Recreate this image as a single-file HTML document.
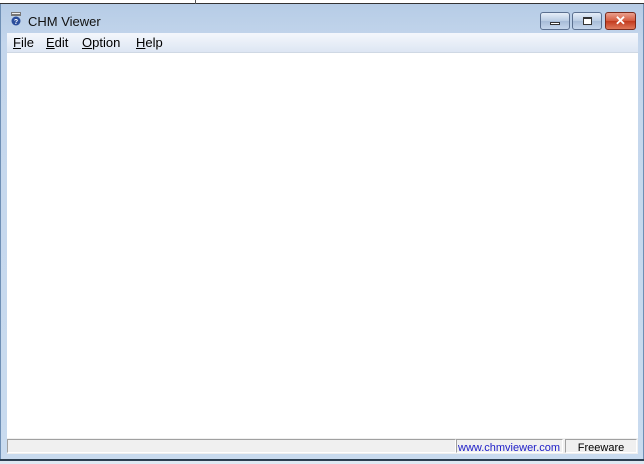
<!DOCTYPE html>
<html><head><style>
*{margin:0;padding:0;box-sizing:border-box}
body{width:644px;height:464px;overflow:hidden;background:#fff;font-family:"Liberation Sans",Tahoma,sans-serif;position:relative}
.top{position:absolute;left:0;top:0;width:644px;height:4px;background:#fff;border-bottom:1px solid #333}
.tick{position:absolute;left:195px;top:0;width:1px;height:4px;background:#555}
.frame{position:absolute;left:0;top:4px;width:644px;height:456px;background:linear-gradient(#b6cce6 0,#c4d6ec 40px,#c9dbef 100%);border-left:1px solid #6e8fb5;border-right:1px solid #6e8fb5}
.bline{position:absolute;left:0;top:459px;width:644px;height:2px;background:#2c3e50}
.bottom{position:absolute;left:0;top:461px;width:644px;height:3px;background:#dfe8f2}
.title{position:absolute;left:28px;top:14px;font-size:13px;color:#111}
.icon{position:absolute;left:10px;top:12px;width:12px;height:14px}
.menu{position:absolute;left:7px;top:33px;width:631px;height:19px;background:linear-gradient(#f4f7fc,#dde6f3);font-size:13px;color:#000}
.menu span{position:absolute;top:2px}
.menu u{text-decoration:underline}
.client{position:absolute;left:7px;top:52px;width:631px;height:386px;background:#fff;border-top:1px solid #cfd8e4}
.status{position:absolute;left:7px;top:438px;width:631px;height:16px;background:#f0f0f0}
.p{position:absolute;top:1px;height:14px;border:1px solid;border-color:#a0a0a0 #fff #fff #a0a0a0;font-size:11px;line-height:16px}
.btn{position:absolute;top:12px;height:18px;border:1px solid #5b7090;border-radius:3px;background:linear-gradient(#e6eef8,#b9cce3 50%,#a7bcd8 51%,#c5d6ec)}
</style></head><body>
<div class="top"><div class="tick"></div></div>
<div class="frame"></div>
<div class="bline"></div><div class="bottom"></div>
<svg class="icon" viewBox="0 0 12 14"><rect x="1" y="0" width="10" height="4" fill="#777"/><rect x="2" y="1" width="8" height="1" fill="#eee"/><circle cx="6" cy="9" r="4.5" fill="#2a4d9c"/><text x="6" y="12" font-size="7" fill="#fff" text-anchor="middle" font-family="Liberation Sans" font-weight="bold">?</text></svg>
<div class="title">CHM Viewer</div>
<div class="btn" style="left:540px;width:30px"><div style="position:absolute;left:9px;top:9px;width:10px;height:3px;border:1px solid #333;background:#fff"></div></div>
<div class="btn" style="left:572px;width:30px"><div style="position:absolute;left:10px;top:4px;width:9px;height:8px;border:1px solid #333;border-top-width:2px;background:#fff"></div></div>
<div class="btn" style="left:605px;width:31px;border-color:#7a2a1c;background:linear-gradient(#eaa08e,#d45a3e 50%,#c23a1e 51%,#e0785a)"><div style="position:absolute;left:0;width:29px;top:0px;text-align:center;color:#fff;font-weight:bold;font-size:13px;line-height:16px">✕</div></div>
<div class="menu">
<span style="left:6px"><u>F</u>ile</span>
<span style="left:39px"><u>E</u>dit</span>
<span style="left:75px"><u>O</u>ption</span>
<span style="left:129px"><u>H</u>elp</span>
</div>
<div class="client"></div>
<div class="status">
<div class="p" style="left:0;width:449px"></div>
<div class="p" style="left:449px;width:107px;color:#2020c8;padding-left:1px">www.chmviewer.com</div>
<div class="p" style="left:558px;width:72px;text-align:center;color:#000">Freeware</div>
</div>
</body></html>
